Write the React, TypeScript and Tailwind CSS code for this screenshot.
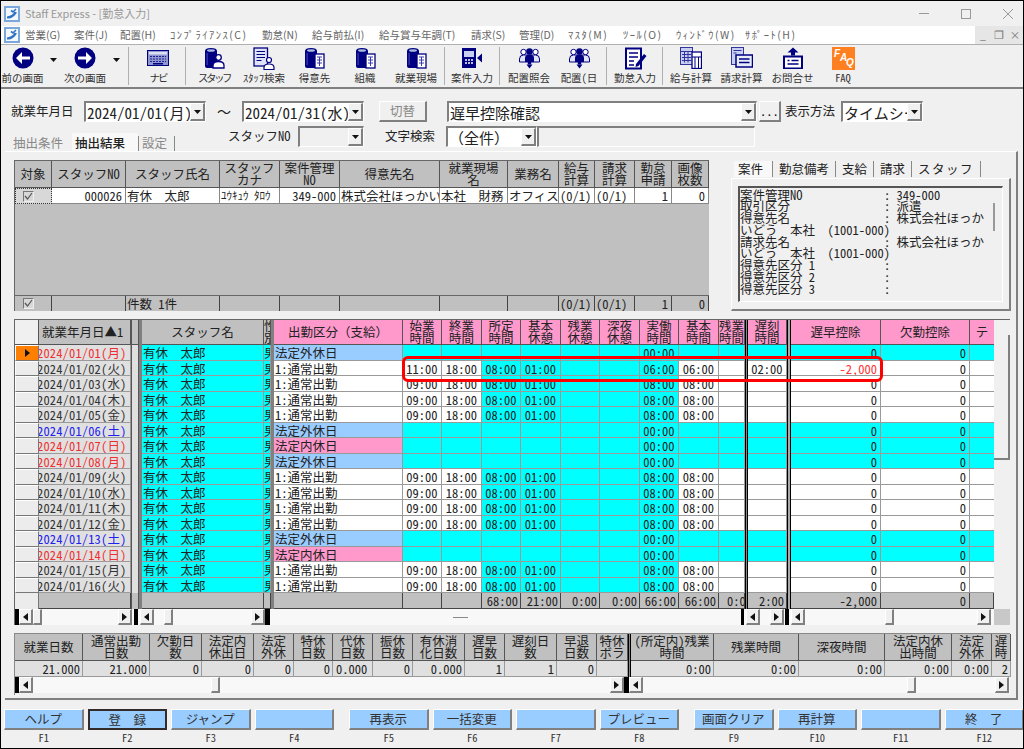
import type { ReactNode } from 'react';

const RAISED = 'border-t border-l border-t-white border-l-white border-r-2 border-b-2 border-r-[#808080] border-b-[#808080]';
const SUNKEN = 'border-t-2 border-l-2 border-t-[#808080] border-l-[#808080] border-r border-b border-r-white border-b-white';
const CELL = 'overflow-hidden whitespace-nowrap leading-[15px] border-r border-b border-[#9a9a9a]';
const HEAD = 'flex items-center justify-center text-center leading-[12px] border-r border-b border-[#555] overflow-hidden';
const LOWER_COLS = 'grid grid-cols-[24px_92px_8px_3px_122px_7px_3px_129px_39px_40px_39px_40px_39px_40px_39px_40px_26px_3px_39px_4px_90px_89px_24px]';
const UPPER_COLS = 'grid grid-cols-[37px_74px_94px_60px_60px_100px_68px_51px_36px_40px_37px_37px]';
const SUMMARY_COLS = 'grid grid-cols-[68px_67px_52px_52px_40px_39px_40px_40px_52px_40px_52px_40px_31px_3px_83px_85px_86px_67px_40px_19px]';
// full-width glyphs (wide parens, wave dash) need the half-width feature turned off
const WIDE = "[font-feature-settings:normal]";
const NAME = '有休\u3000\u3000太郎';

/* ---------- icons ---------- */

function AppIcon() {
  return (
    <svg width="16" height="16" viewBox="0 0 16 16">
      <rect x="1" y="1" width="14" height="14" fill="#f4f8fc" stroke="#7aa8dc" strokeWidth="2" />
      <path d="M3 12.500C7 13 10 11 13 6.500L10.500 5.500C9.500 8 7 10 3 10.500Z" fill="#2f74c4" />
      <path d="M7 4.500l2 1.500 3-3" fill="none" stroke="#2f74c4" strokeWidth="1.600" />
    </svg>
  );
}

function ArrowIcon({ right }: { right?: boolean }) {
  return (
    <svg width="22" height="22" viewBox="0 0 22 22">
      <circle cx="11" cy="11" r="10.500" fill="#000080" />
      {right ? (
        <path d="M4 9.500h8V5l6 6-6 6v-4.500H4z" fill="#fff" />
      ) : (
        <path d="M18 9.500h-8V5l-6 6 6 6v-4.500h8z" fill="#fff" />
      )}
    </svg>
  );
}

function NaviIcon() {
  return (
    <svg width="22" height="16" viewBox="0 0 22 16">
      <rect x="0.500" y="0.500" width="21" height="15" fill="#8f96d0" stroke="#000080" />
      <rect x="2" y="2" width="18" height="2.500" fill="#dde0f2" />
      <path d="M3 6.500h16M3 9h16M3 11.500h16" stroke="#20208c" strokeDasharray="2 1" />
      <rect x="6" y="13" width="10" height="1.500" fill="#000080" />
    </svg>
  );
}

function BookIcon({ kind }: { kind: 'person' | 'building' }) {
  return (
    <svg width="21" height="22" viewBox="0 0 21 22">
      <path d="M1 4q0-3 6-3t6 3v17H3q-2 0-2-2z" fill="#000080" />
      <ellipse cx="7" cy="3.500" rx="4" ry="1.300" fill="#a8bce0" />
      <rect x="2.500" y="6" width="1.300" height="12" fill="#3a3ab0" />
      {kind === 'person' ? (
        <g>
          <circle cx="14.500" cy="10.500" r="2.800" fill="#fff" stroke="#000080" strokeWidth="1.300" />
          <path d="M9 21v-2.500q0-4 5.500-4t5.500 4V21z" fill="#fff" stroke="#000080" strokeWidth="1.300" />
        </g>
      ) : (
        <g>
          <rect x="11" y="7" width="9" height="14" fill="#fff" stroke="#000080" strokeWidth="1.300" />
          <path d="M13 10h5M13 13h5M13 16h5M15.500 10v9" stroke="#3a3ab0" />
        </g>
      )}
    </svg>
  );
}

function StaffSearchIcon() {
  return (
    <svg width="22" height="23" viewBox="0 0 22 23">
      <rect x="1" y="1" width="13.500" height="18" fill="#dfe3f5" stroke="#000080" strokeWidth="1.300" />
      <path d="M3.500 4.500h8.500M3.500 7.500h8.500M3.500 10.500h8.500M3.500 13.500h5" stroke="#000080" />
      <circle cx="16" cy="13" r="2.500" fill="#fff" stroke="#000080" strokeWidth="1.200" />
      <path d="M11 22.500v-2q0-3.500 5-3.500t5 3.500v2z" fill="#fff" stroke="#000080" strokeWidth="1.200" />
    </svg>
  );
}

function CaseIcon() {
  return (
    <svg width="22" height="22" viewBox="0 0 22 22">
      <rect x="1" y="1" width="14" height="20" fill="#000080" />
      <rect x="3" y="4" width="10" height="6" fill="#c8d0f0" />
      <path d="M4 13h2M7 13h2M10 13h2M4 16h2M7 16h2M10 16h2" stroke="#fff" strokeWidth="1.500" />
      <path d="M16 11l5-4.500v9z" fill="#000080" />
    </svg>
  );
}

function PeopleIcon() {
  return (
    <svg width="21" height="22" viewBox="0 0 21 22">
      <circle cx="4.500" cy="5" r="2.700" fill="#fff" stroke="#000080" />
      <circle cx="16.500" cy="5" r="2.700" fill="#fff" stroke="#000080" />
      <path d="M0.500 15v-3q0-4 4-4h12q4 0 4 4v3z" fill="#e0e4f6" stroke="#000080" />
      <circle cx="10.500" cy="4.500" r="3.300" fill="#000080" />
      <path d="M6 15v-4q0-3.500 4.500-3.500T15 11v4z" fill="#000080" />
      <rect x="8.800" y="15" width="3.400" height="2.500" fill="#000080" />
      <path d="M7.500 17.500h6l-3 4z" fill="#000080" />
    </svg>
  );
}

function AttendanceIcon() {
  return (
    <svg width="23" height="23" viewBox="0 0 23 23">
      <rect x="2" y="1.500" width="15" height="20" fill="#fff" stroke="#000080" strokeWidth="2" />
      <path d="M5 6h9M5 10h9M5 14h5M5 18h5" stroke="#000080" strokeWidth="1.500" />
      <path d="M12 17l8-10 2.500 2-8 10-3 1z" fill="#000080" />
    </svg>
  );
}

function PayIcon() {
  return (
    <svg width="22" height="22" viewBox="0 0 22 22">
      <rect x="0.500" y="0.500" width="12" height="17" fill="#c8d0f0" stroke="#34349c" />
      <path d="M0.500 4.500h12M2 7.500h9M2 10.500h9M2 13.500h9M4.500 4.500v11M8 4.500v11" stroke="#34349c" />
      <rect x="12" y="5" width="9.500" height="16.500" fill="#fff" stroke="#000080" strokeWidth="1.300" />
      <path d="M12 10h9.500M15 10v11M18.500 10v11" stroke="#000080" />
    </svg>
  );
}

function BillIcon() {
  return (
    <svg width="22" height="22" viewBox="0 0 22 22">
      <rect x="0.500" y="0.500" width="12" height="17" fill="#c8d0f0" stroke="#34349c" />
      <path d="M2.500 3.500h8M2.500 6h3" stroke="#34349c" />
      <rect x="5" y="8" width="16.500" height="12" fill="#e8ecf8" stroke="#000080" strokeWidth="1.500" />
      <path d="M8 12h10.500M8 15.500h10.500" stroke="#000080" strokeWidth="1.500" />
    </svg>
  );
}

function InquiryIcon() {
  return (
    <svg width="20" height="22" viewBox="0 0 20 22">
      <path d="M10 0.500l5.500 5h-3.500v3H8v-3H4.500z" fill="#000080" />
      <rect x="1" y="9.500" width="18" height="12" fill="#fff" stroke="#000080" strokeWidth="2" />
      <path d="M4.500 13.500h2M8.500 13.500h7M4.500 17h11" stroke="#000080" strokeWidth="1.500" />
    </svg>
  );
}

function FaqIcon() {
  return (
    <svg width="23" height="23" viewBox="0 0 23 23">
      <rect width="23" height="23" fill="#ff8020" />
      <text x="2" y="10" fontSize="10" fontWeight="700" fontStyle="italic" fill="#fff" fontFamily="Liberation Sans, sans-serif">F</text>
      <text x="8" y="14" fontSize="10" fontWeight="700" fontStyle="italic" fill="#fff" fontFamily="Liberation Sans, sans-serif">A</text>
      <text x="14" y="19" fontSize="10" fontWeight="700" fontStyle="italic" fill="#fff" fontFamily="Liberation Sans, sans-serif">Q</text>
    </svg>
  );
}

function Tri({ dir }: { dir: 'left' | 'right' | 'down' }) {
  if (dir === 'down') {
    return (
      <svg width="7" height="4" viewBox="0 0 7 4">
        <path d="M0 0h7L3.500 4z" fill="#111" />
      </svg>
    );
  }
  return (
    <svg width="5" height="8" viewBox="0 0 5 8">
      <path d={dir === 'left' ? 'M5 0v8L0 4z' : 'M0 0v8l5-4z'} fill="#111" />
    </svg>
  );
}

function Check() {
  return (
    <span className="flex h-[11px] w-[11px] items-center justify-center border border-t-[#777] border-l-[#777] border-r-[#eee] border-b-[#eee] bg-[#d8d8d8]">
      <svg width="9" height="9" viewBox="0 0 9 9">
        <path d="M1 4l2.500 3L8 1" fill="none" stroke="#555" strokeWidth="1.200" />
      </svg>
    </span>
  );
}

/* ---------- header parts ---------- */

const MENU: { label: string; width: string; tracking?: string }[] = [
  { label: '営業(G)', width: 'w-[49px]' },
  { label: '案件(J)', width: 'w-[46px]' },
  { label: '配置(H)', width: 'w-[50px]' },
  { label: 'ｺﾝﾌﾟﾗｲｱﾝｽ(C)', width: 'w-[92px]', tracking: 'tracking-[1.500px]' },
  { label: '勤怠(N)', width: 'w-[50px]' },
  { label: '給与前払(I)', width: 'w-[67px]' },
  { label: '給与賞与年調(T)', width: 'w-[92px]' },
  { label: '請求(S)', width: 'w-[48px]' },
  { label: '管理(D)', width: 'w-[49px]' },
  { label: 'ﾏｽﾀ(M)', width: 'w-[55px]', tracking: 'tracking-[1.500px]' },
  { label: 'ﾂｰﾙ(O)', width: 'w-[53px]', tracking: 'tracking-[1.500px]' },
  { label: 'ｳｨﾝﾄﾞｳ(W)', width: 'w-[69px]', tracking: 'tracking-[1.500px]' },
  { label: 'ｻﾎﾟｰﾄ(H)', width: 'w-[48px]', tracking: 'tracking-[1.500px]' },
];

function ToolButton({ label, icon, className = 'w-[50px]', labelClass = '' }: { label: string; icon: ReactNode; className?: string; labelClass?: string }) {
  return (
    <div className={`flex h-[41px] flex-col items-center ${className}`}>
      <div className="flex h-[25px] items-center justify-center">{icon}</div>
      <span className={`whitespace-nowrap text-[10.5px] leading-[14px] text-[#333] ${labelClass}`}>{label}</span>
    </div>
  );
}

function ToolSep() {
  return <div className="mx-[2px] h-[38px] w-[1px] shrink-0 bg-[#b0b0b0]" />;
}

function Combo({ text, className, textClass = 'text-[15px]', disabled }: { text: string; className: string; textClass?: string; disabled?: boolean }) {
  return (
    <div className={`flex h-[21px] items-stretch ${SUNKEN} ${disabled ? 'bg-[#f0f0f0]' : 'bg-white'} ${className}`}>
      <div className={`flex-1 overflow-hidden whitespace-nowrap pl-[1px] leading-[19px] text-[#222] ${textClass}`}>{text}</div>
      <div className={`flex w-[15px] shrink-0 items-center justify-center bg-[#f0f0f0] ${RAISED}`}>
        <Tri dir="down" />
      </div>
    </div>
  );
}

/* ---------- scrollbars ---------- */

function ScrollButton({ dir }: { dir: 'left' | 'right' }) {
  return (
    <div className={`flex h-[16px] w-[14px] shrink-0 items-center justify-center bg-[#f0f0f0] ${RAISED}`}>
      <Tri dir={dir} />
    </div>
  );
}

function Thumb() {
  return <div className={`h-[16px] w-[9px] shrink-0 bg-[#f0f0f0] ${RAISED}`} />;
}

function Tick({ className = 'w-[4px]' }: { className?: string }) {
  return <div className={`h-[16px] shrink-0 bg-black ${className}`} />;
}

function ScrollBars() {
  return (
    <div className="flex h-[16px] bg-[#f8f8f8]">
      <Tick />
      <ScrollButton dir="left" />
      <div className="flex w-[85px]"><Thumb /></div>
      <ScrollButton dir="right" />
      <div className="w-[2px]" />
      <Tick />
      <div className="w-[2px]" />
      <ScrollButton dir="left" />
      <div className="flex w-[97px] pl-[10px]"><Thumb /></div>
      <ScrollButton dir="right" />
      <Tick className="w-[5px]" />
      <div className="flex w-[471px] items-center justify-center pr-[90px]">
        <div className="h-[1px] w-[15px] bg-[#888]" />
      </div>
      <Tick className="w-[3px]" />
      <div className="w-[2px]" />
      <ScrollButton dir="left" />
      <div className="w-[10px]" />
      <ScrollButton dir="right" />
      <div className="w-[1px]" />
      <Tick />
      <div className="w-[2px]" />
      <ScrollButton dir="left" />
      <div className="flex w-[172px] pl-[80px]"><Thumb /></div>
      <ScrollButton dir="right" />
    </div>
  );
}

/* ---------- upper grid ---------- */

const UPPER_HEAD = ['対象', 'スタッフNO', 'スタッフ氏名', 'スタッフ\nカナ', '案件管理\nNO', '得意先名', '就業現場\n名', '業務名', '給与\n計算', '請求\n計算', '勤怠\n申請', '画像\n枚数'];

function UpperGrid() {
  const row = ['', '000026', NAME, 'ﾕｳｷｭｳ ﾀﾛｳ', '349-000', '株式会社ほっかいどう', '本社\u3000\u3000財務', 'オフィスワーク', '(0/1)', '(0/1)', '1', '0'];
  const foot = ['', '', '件数 1件', '', '', '', '', '', '(0/1)', '(0/1)', '1', '0'];
  const rightAligned = [1, 4, 10, 11];

  return (
    <div className="flex h-[151px] w-[695px] shrink-0 flex-col border-t border-l border-[#666] bg-[#c0c0c0]">
      <div className={`${UPPER_COLS} h-[27px]`}>
        {UPPER_HEAD.map((h) => (
          <div key={h} className={`${HEAD} whitespace-pre-line`}>{h}</div>
        ))}
      </div>
      <div className={`${UPPER_COLS} h-[16px]`}>
        {row.map((c, i) => (
          i === 0 ? (
            <div key={i} className="flex items-center justify-center border border-dotted border-[#333] bg-[#d8d8d8] pr-[10px]"><Check /></div>
          ) : (
            <div key={i} className={`${CELL} border-[#888] bg-white ${rightAligned.includes(i) ? 'pr-[3px] text-right' : 'pl-[1px]'} ${i === 3 ? 'text-[11px]' : ''}`}>{c}</div>
          )
        ))}
      </div>
      <div className="flex-1" />
      <div className={`${UPPER_COLS} h-[16px] border-t border-[#666]`}>
        {foot.map((c, i) => (
          i === 0 ? (
            <div key={i} className="flex items-center justify-center border-r border-[#444] pr-[10px]"><Check /></div>
          ) : (
            <div key={i} className={`${CELL} border-b-0 border-[#444] ${rightAligned.includes(i) ? 'pr-[3px] text-right' : 'pl-[1px]'}`}>{c}</div>
          )
        ))}
      </div>
    </div>
  );
}

/* ---------- detail panel ---------- */

const DETAIL_TABS = ['案件', '勤怠備考', '支給', '請求', 'スタッフ'];

const DETAIL_LINES = [
  ['案件管理NO', ': 349-000'],
  ['取引区分', ': 派遣'],
  ['得意先名', ': 株式会社ほっか'],
  ['いどう\u3000\u3000本社\u3000\u3000(1001-000)', ''],
  ['請求先名', ': 株式会社ほっか'],
  ['いどう\u3000\u3000本社\u3000\u3000(1001-000)', ''],
  ['得意先区分 1', ':'],
  ['得意先区分 2', ':'],
  ['得意先区分 3', ':'],
];

function DetailPanel() {
  return (
    <div className="ml-[22px] flex w-[280px] flex-col">
      <div className="flex h-[18px] items-center pl-[3px]">
        {DETAIL_TABS.map((t, i) => (
          <span key={t} className={`border-r border-[#888] leading-[16px] ${i === 0 ? 'bg-[#f8f8f8] pr-[9px] pl-[4px]' : 'px-[6px]'} ${i === 4 ? 'tracking-[1.500px]' : ''}`}>{t}</span>
        ))}
      </div>
      <div className="flex h-[133px] flex-col border border-r-2 border-b-2 border-t-white border-l-white border-r-[#808080] border-b-[#808080] px-[6px] pt-[7px] pb-[7px]">
        <div className="relative flex-1 border-t-2 border-l-2 border-t-[#555] border-l-[#555] border-r border-b border-r-white border-b-white pt-[1px]">
          {DETAIL_LINES.map(([a, b], i) => (
            <div key={i} className="flex h-[11.75px] items-center whitespace-nowrap">
              <span className="w-[144px] shrink-0">{a}</span>
              <span>{b}</span>
            </div>
          ))}
          <div className="absolute top-[15px] right-[7px] h-[28px] w-[2px] bg-[#999]" />
        </div>
      </div>
    </div>
  );
}

/* ---------- lower grid ---------- */

type Kind = 'work' | 'out' | 'in';

const RED = 'text-[#f03030]';
const BLUE = 'text-[#2020f0]';
const GRAY = 'text-[#333]';

const DAYS: { date: string; color: string; kind: Kind }[] = [
  { date: '2024/01/01(月)', color: RED, kind: 'out' },
  { date: '2024/01/02(火)', color: GRAY, kind: 'work' },
  { date: '2024/01/03(水)', color: GRAY, kind: 'work' },
  { date: '2024/01/04(木)', color: GRAY, kind: 'work' },
  { date: '2024/01/05(金)', color: GRAY, kind: 'work' },
  { date: '2024/01/06(土)', color: BLUE, kind: 'out' },
  { date: '2024/01/07(日)', color: RED, kind: 'in' },
  { date: '2024/01/08(月)', color: RED, kind: 'out' },
  { date: '2024/01/09(火)', color: GRAY, kind: 'work' },
  { date: '2024/01/10(水)', color: GRAY, kind: 'work' },
  { date: '2024/01/11(木)', color: GRAY, kind: 'work' },
  { date: '2024/01/12(金)', color: GRAY, kind: 'work' },
  { date: '2024/01/13(土)', color: BLUE, kind: 'out' },
  { date: '2024/01/14(日)', color: RED, kind: 'in' },
  { date: '2024/01/15(月)', color: GRAY, kind: 'work' },
  { date: '2024/01/16(火)', color: GRAY, kind: 'work' },
];

const GRAY_HEAD = 'bg-[#c0c0c0]';
const PINK_HEAD = 'bg-[#ff99cc]';

function LowerHeader() {
  const pink = ['始業\n時間', '終業\n時間', '所定\n時間', '基本\n休憩', '残業\n休憩', '深夜\n休憩', '実働\n時間', '基本\n時間', '残業\n時間'];
  return (
    <div className={`${LOWER_COLS} h-[26px]`}>
      <div className="border-r border-b border-[#555] bg-[#f0f0f0]" />
      <div className={`${HEAD} ${GRAY_HEAD} justify-start pl-[3px] whitespace-nowrap`}>就業年月日▲1</div>
      <div className={`${HEAD} ${GRAY_HEAD} border-l`} />
      <div className="bg-[#808080]" />
      <div className={`${HEAD} ${GRAY_HEAD}`}>スタッフ名</div>
      <div className={`${HEAD} ${GRAY_HEAD} items-start justify-start whitespace-pre-line`}>{'性\n別'}</div>
      <div className="bg-[#808080]" />
      <div className={`${HEAD} ${PINK_HEAD} ${WIDE}`}>出勤区分（支給）</div>
      {pink.map((h) => (
        <div key={h} className={`${HEAD} ${PINK_HEAD} whitespace-pre`}>{h}</div>
      ))}
      <div className="border-x border-black bg-[#888]" />
      <div className={`${HEAD} ${PINK_HEAD} whitespace-pre`}>{'遅刻\n時間'}</div>
      <div className="border-x border-black bg-[#aaa]" />
      <div className={`${HEAD} ${PINK_HEAD}`}>遅早控除</div>
      <div className={`${HEAD} ${PINK_HEAD}`}>欠勤控除</div>
      <div className={`${HEAD} ${PINK_HEAD} border-r-0`}>テ</div>
    </div>
  );
}

function DayRow({ row, index }: { row: (typeof DAYS)[number]; index: number }) {
  const work = row.kind === 'work';
  const late = index === 1;
  const cyan = 'bg-[#00ffff]';
  const base = work ? 'bg-white' : cyan;
  const kubunBg = work ? 'bg-white' : row.kind === 'out' ? 'bg-[#99ccff]' : 'bg-[#ff99cc]';
  const kubun = work ? '1:通常出勤' : row.kind === 'out' ? '法定外休日' : '法定内休日';
  const hours = late ? '06:00' : '08:00';

  const time = (value: string, bg: string, key: string) => (
    <div key={key} className={`${CELL} ${bg} text-center`}>{value}</div>
  );

  return (
    <div className={`${LOWER_COLS} h-[15.5px]`}>
      <div className={`flex items-center justify-center border border-t-white border-l-white border-r-[#777] border-b-[#777] ${index === 0 ? 'bg-[#ff8000]' : 'bg-[#ececec]'}`}>
        {index === 0 && <Tri dir="right" />}
      </div>
      <div className={`${CELL} bg-[#e0e0e0] ${row.color}`}>
        <span className="-ml-[2px] block tracking-[0.150px]">{row.date}</span>
      </div>
      <div className="border-x border-[#555] bg-[#e0e0e0]" />
      <div className="bg-[#808080]" />
      <div className={`${CELL} ${cyan} pl-[1px]`}>{NAME}</div>
      <div className={`${CELL} ${cyan}`}>男</div>
      <div className="bg-[#808080]" />
      <div className={`${CELL} ${kubunBg} pl-[1px]`}>{kubun}</div>
      {time(work ? (late ? '11:00' : '09:00') : '', base, 'start')}
      {time(work ? '18:00' : '', base, 'end')}
      {time(work ? '08:00' : '', cyan, 'fixed')}
      {time(work ? '01:00' : '', cyan, 'rest')}
      {time('', cyan, 'orest')}
      {time('', cyan, 'nrest')}
      {time(work ? hours : '00:00', cyan, 'actual')}
      {time(work ? hours : '', base, 'basic')}
      {time('', base, 'over')}
      <div className="border-x border-black bg-[#888]" />
      {time(late ? '02:00' : '', base, 'late')}
      <div className="border-x border-black bg-[#aaa]" />
      <div className={`${CELL} ${base} pr-[3px] text-right ${late ? 'text-[#ff3333]' : ''}`}>{late ? '-2,000' : '0'}</div>
      <div className={`${CELL} ${base} pr-[3px] text-right`}>0</div>
      <div className={`${CELL} ${base} border-r-0`} />
    </div>
  );
}

function TotalsRow() {
  const dark = 'border-r border-b border-[#444] bg-[#c0c0c0]';
  const val = `${dark} overflow-hidden whitespace-nowrap pr-[2px] text-right leading-[15px]`;
  return (
    <div className={`${LOWER_COLS} h-[16px]`}>
      <div className="border-r border-[#777] bg-[#ececec]" />
      <div className={dark} />
      <div className="border-x border-[#555] bg-[#c0c0c0]" />
      <div className="bg-[#808080]" />
      <div className={dark} />
      <div className={dark} />
      <div className="bg-[#808080]" />
      <div className={dark} />
      <div className={dark} />
      <div className={dark} />
      <div className={val}>68:00</div>
      <div className={val}>21:00</div>
      <div className={val}>0:00</div>
      <div className={val}>0:00</div>
      <div className={val}>66:00</div>
      <div className={val}>66:00</div>
      <div className={`${dark} overflow-hidden pl-[8px] leading-[15px]`}>0:00</div>
      <div className="border-x border-black bg-[#888]" />
      <div className={val}>2:00</div>
      <div className="border-x border-black bg-[#aaa]" />
      <div className={`${val} pr-[3px]`}>-2,000</div>
      <div className={`${val} pr-[3px]`}>0</div>
      <div className={dark} />
    </div>
  );
}

function LowerGrid() {
  return (
    <div className="relative mt-[8px] flex h-[306px] w-[996px] border-t border-l border-[#666]">
      <div className="flex w-[979px] flex-col">
        <LowerHeader />
        {DAYS.map((d, i) => (
          <DayRow key={d.date} row={d} index={i} />
        ))}
        <TotalsRow />
        <ScrollBars />
      </div>
      <div className="flex w-[16px] flex-col">
        <div className="h-[15px]" />
        <div className="h-[125px] border-r-2 border-b-2 border-[#808080]" />
        <div className="flex-1" />
        <div className="h-[16px] bg-[#c8c8c8]" />
      </div>
      {/* red annotation drawn over the 01/02 row */}
      <div className="absolute top-[36px] left-[387px] h-[26px] w-[481px] rounded-[6px] border-[3px] border-[#ff0000]" />
    </div>
  );
}

/* ---------- summary ---------- */

const SUMMARY: { head: string; value: string; left?: boolean }[] = [
  { head: '就業日数', value: '21.000' },
  { head: '通常出勤\n日数', value: '21.000' },
  { head: '欠勤日\n数', value: '0' },
  { head: '法定内\n休出日', value: '0' },
  { head: '法定\n外休', value: '0' },
  { head: '特休\n日数', value: '0' },
  { head: '代休\n日数', value: '0.000', left: true },
  { head: '振休\n日数', value: '0' },
  { head: '有休消\n化日数', value: '0.000' },
  { head: '遅早\n日数', value: '1' },
  { head: '遅刻日\n数', value: '1' },
  { head: '早退\n日数', value: '0' },
  { head: '特休\nボラ', value: '' },
  { head: '', value: '' },
  { head: '(所定内)残業\n時間', value: '0:00' },
  { head: '残業時間', value: '0:00' },
  { head: '深夜時間', value: '0:00' },
  { head: '法定内休\n出時間', value: '0:00' },
  { head: '法定\n外休', value: '0:00' },
  { head: '遅\n時', value: '2' },
];

function Summary() {
  return (
    <div className="mt-[8px] flex h-[62px] w-[996px] flex-col border-t border-l border-[#888]">
      <div className={`${SUMMARY_COLS} h-[27px]`}>
        {SUMMARY.map((c, i) => (
          i === 13 ? (
            <div key={i} className="border-x border-black bg-[#888]" />
          ) : (
            <div key={i} className={`${HEAD} bg-[#c0c0c0] whitespace-pre`}>{c.head}</div>
          )
        ))}
      </div>
      <div className={`${SUMMARY_COLS} h-[16px]`}>
        {SUMMARY.map((c, i) => (
          i === 13 ? (
            <div key={i} className="border-x border-black bg-[#888]" />
          ) : (
            <div key={i} className={`${CELL} bg-[#e0e0e0] pr-[2px] ${c.left ? 'pl-[3px]' : 'text-right'}`}>{c.value}</div>
          )
        ))}
      </div>
      <div className="flex h-[16px] bg-[#f8f8f8]">
        <Tick />
        <ScrollButton dir="left" />
        <div className="flex w-[577px] pl-[178px]"><Thumb /></div>
        <ScrollButton dir="right" />
        <Tick className="w-[5px]" />
        <ScrollButton dir="left" />
        <div className="flex w-[352px] pl-[264px]"><Thumb /></div>
        <ScrollButton dir="right" />
      </div>
    </div>
  );
}

/* ---------- function keys ---------- */

const KEYS = ['ヘルプ', '登　　録', 'ジャンプ', '', '再表示', '一括変更', '', 'プレビュー', '画面クリア', '再計算', '', '終　　了'];

function FunctionKey({ label, n }: { label: string; n: number }) {
  const focused = n === 2;
  return (
    <div className="flex w-[79.5px] shrink-0 flex-col items-center">
      <div className={`h-[21px] w-full bg-[#99ccff] text-center text-[#333] ${focused ? 'border-2 border-[#332a2a] leading-[17px]' : `${RAISED} leading-[18px]`}`}>{label}</div>
      <span className="mt-[2px] text-[10.5px] leading-[12px] text-[#333]">F{n}</span>
    </div>
  );
}

function FunctionKeys() {
  const groups = [KEYS.slice(0, 4), KEYS.slice(4, 8), KEYS.slice(8, 12)];
  return (
    <div className="flex gap-[15px] pt-[9px] pl-[3px]">
      {groups.map((g, gi) => (
        <div key={gi} className="flex gap-[4px]">
          {g.map((k, i) => (
            <FunctionKey key={i} label={k} n={gi * 4 + i + 1} />
          ))}
        </div>
      ))}
    </div>
  );
}

/* ---------- page ---------- */

export default function App() {
  return (
    <div className="h-[749px] w-[1024px] overflow-hidden border border-black bg-[#f0f0f0] font-['Noto_Sans_CJK_JP',sans-serif] text-[12.5px] text-[#222] [font-feature-settings:'hwid']">
      {/* Title bar */}
      <div className="flex h-[25px] items-center pl-[3px]">
        <AppIcon />
        <span className={`ml-[5px] text-[11px] text-[#999] ${WIDE}`}>Staff Express - [勤怠入力]</span>
        <div className="ml-auto flex items-center gap-[32px] pr-[10px]">
          <div className="h-[1px] w-[10px] bg-[#999]" />
          <div className="h-[10px] w-[10px] border border-[#999]" />
          <svg width="10" height="10" viewBox="0 0 10 10">
            <path d="M0 0l10 10M10 0L0 10" stroke="#999" />
          </svg>
        </div>
      </div>

      {/* Menu */}
      <div className={`flex h-[18px] items-center bg-white pl-[3px] text-[10.5px] text-[#666] ${WIDE}`}>
        <AppIcon />
        <div className="ml-[5px] flex whitespace-nowrap">
          {MENU.map((m) => (
            <span key={m.label} className={`${m.width} ${m.tracking ?? ''}`}>{m.label}</span>
          ))}
        </div>
        <div className="ml-auto flex h-full items-center bg-[#e6e6e6] text-[#777]">
          <span className="w-[16px] text-center">_</span>
          <span className="w-[16px] text-center">❐</span>
          <span className="w-[16px] text-center">×</span>
        </div>
      </div>

      {/* Toolbar */}
      <div className="flex h-[45px] items-center border-t border-b-2 border-t-[#b0b0b0] border-b-[#808080]">
        <ToolButton label="前の画面" icon={<ArrowIcon />} className="w-[43px]" />
        <div className="w-[18px] pb-[12px] pl-[6px]"><Tri dir="down" /></div>
        <ToolButton label="次の画面" icon={<ArrowIcon right />} className="w-[46px]" />
        <div className="w-[18px] pb-[12px] pl-[5px]"><Tri dir="down" /></div>
        <ToolSep />
        <ToolButton label="ナビ" icon={<NaviIcon />} labelClass="tracking-[-2px]" className="ml-[2px] w-[50px]" />
        <ToolSep />
        <ToolButton label="スタッフ" icon={<BookIcon kind="person" />} labelClass="tracking-[-2.500px]" className="ml-[1px] w-[50px]" />
        <ToolButton label="ｽﾀｯﾌ検索" icon={<StaffSearchIcon />} />
        <ToolButton label="得意先" icon={<BookIcon kind="building" />} className="w-[51px]" />
        <ToolButton label="組織" icon={<BookIcon kind="building" />} />
        <ToolButton label="就業現場" icon={<BookIcon kind="building" />} className="w-[52px]" />
        <ToolSep />
        <ToolButton label="案件入力" icon={<CaseIcon />} />
        <ToolSep />
        <ToolButton label="配置照会" icon={<PeopleIcon />} className="ml-[2px] w-[50px]" />
        <ToolButton label="配置(日" icon={<PeopleIcon />} />
        <ToolSep />
        <ToolButton label="勤怠入力" icon={<AttendanceIcon />} className="ml-[1px] w-[50px]" />
        <ToolSep />
        <ToolButton label="給与計算" icon={<PayIcon />} className="ml-[1px] w-[50px]" />
        <ToolButton label="請求計算" icon={<BillIcon />} className="w-[51px]" />
        <ToolButton label="お問合せ" icon={<InquiryIcon />} className="w-[51px]" />
        <ToolButton label="FAQ" icon={<FaqIcon />} />
      </div>

      {/* Condition row 1 */}
      <div className="mt-[11px] flex h-[23px] items-center pl-[10px]">
        <span className="w-[73px]">就業年月日</span>
        <Combo text="2024/01/01(月)" className="w-[122px]" />
        <span className={`w-[36px] text-center text-[14px] ${WIDE}`}>～</span>
        <Combo text="2024/01/31(水)" className="w-[122px]" />
        <button className={`ml-[15px] h-[21px] w-[48px] bg-[#f0f0f0] text-[#888] ${RAISED}`}>切替</button>
        <Combo text="遅早控除確認" className="ml-[20px] w-[310px]" />
        <button className={`ml-[2px] h-[21px] w-[22px] bg-[#f0f0f0] leading-[18px] ${RAISED}`}>...</button>
        <span className="ml-[4px] w-[56px]">表示方法</span>
        <Combo text="タイムシート" className="w-[82px]" />
      </div>

      {/* Condition row 2 and tabs */}
      <div className="flex h-[28px] items-end">
        <div className="flex h-[18px] items-end pl-[12px]">
          <span className="w-[59px] pb-[1px] leading-[14px] text-[#888]">抽出条件</span>
          <span className="h-[18px] w-[66px] rounded-t-[2px] bg-[#f8f8f8] pt-[3px] pl-[3px] font-medium leading-[14px]">抽出結果</span>
          <span className="w-[37px] border-x border-[#888] pb-[1px] pl-[3px] leading-[14px] text-[#888]">設定</span>
        </div>
        <div className="mb-[4px] flex items-center">
          <span className="ml-[53px] w-[70px]">スタッフNO</span>
          <Combo text="" disabled className="w-[66px]" />
          <span className="ml-[21px] w-[61px]">文字検索</span>
          <Combo text="（全件）" textClass={`text-[15px] ${WIDE}`} className="w-[91px]" />
          <div className={`h-[21px] w-[218px] ${SUNKEN}`} />
        </div>
      </div>

      {/* Tab panel */}
      <div className="ml-[4px] flex h-[549px] w-[1013px] flex-col border-t border-r-2 border-b-2 border-t-white border-r-[#808080] border-b-[#808080] pt-[8px] pl-[9px]">
        <div className="flex">
          <UpperGrid />
          <DetailPanel />
        </div>
        <LowerGrid />
        <Summary />
      </div>

      <FunctionKeys />
    </div>
  );
}
